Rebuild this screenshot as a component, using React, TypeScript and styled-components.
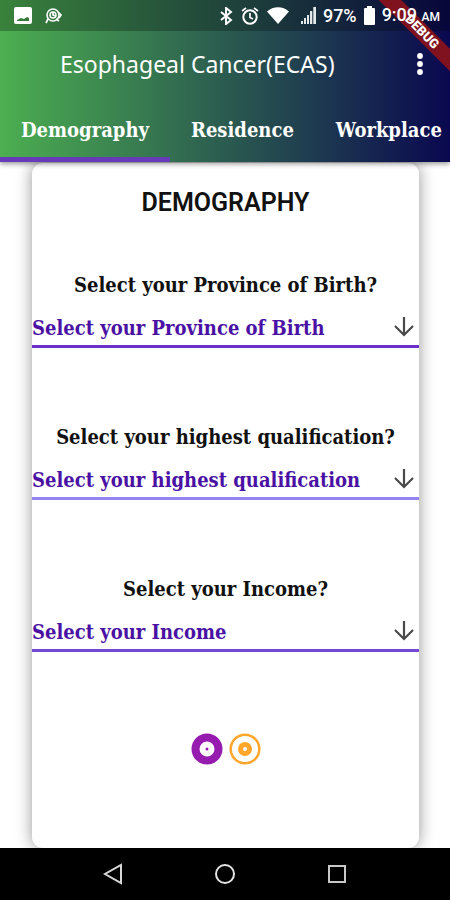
import React from "react";
import styled, { createGlobalStyle } from "styled-components";

const slab = `"Roboto Slab", "DejaVu Serif Condensed", "DejaVu Serif", serif`;

const GlobalStyle = createGlobalStyle`
  *, *::before, *::after { box-sizing: border-box; }
  body { margin: 0; background: #fff; font-family: Roboto, sans-serif; }
  button, select { font: inherit; color: inherit; background: none; border: 0; padding: 0; margin: 0; cursor: pointer; }
`;

const Screen = styled.div`
  position: relative;
  min-height: 100vh;
  display: flex;
  flex-direction: column;
  overflow: hidden;
`;

const Header = styled.header`
  position: relative;
  z-index: 1;
  color: #fff;
  background:
    linear-gradient(rgba(0, 0, 0, 0.26), rgba(0, 0, 0, 0.26)) top / 100% 31px no-repeat,
    linear-gradient(90deg, #4caf50 0%, #0a0850 100%);
  box-shadow: 0 2px 5px rgba(0, 0, 0, 0.4);
`;

const StatusBar = styled.div`
  position: relative;
  z-index: 2;
  display: flex;
  align-items: center;
  justify-content: space-between;
  height: 31px;
  padding: 0 10px 0 14px;
`;

const StatusGroup = styled.div<{ $gap: number }>`
  display: flex;
  align-items: center;
  gap: ${(p) => p.$gap}px;
`;

const StatusText = styled.span`
  font-size: 18px;
  font-weight: 500;
  line-height: 20px;
  white-space: nowrap;

  small { font-size: 12px; }
`;

const Connectivity = styled.div`
  display: flex;
  align-items: center;
  gap: 8px;
  margin-right: 0;

  > :last-child { margin-left: 4px; }
`;

const AppBar = styled.div`
  display: flex;
  align-items: center;
  justify-content: space-between;
  height: 66px;
  padding: 0 20px 0 60px;
`;

const Title = styled.h1`
  margin: 0;
  font: 400 23px/32px "Noto Sans", sans-serif;
  white-space: nowrap;
`;

const MenuButton = styled.button`
  display: flex;
  justify-content: center;
  width: 20px;
  height: 32px;
  align-items: center;
`;

const Tabs = styled.nav`
  display: flex;
  height: 65px;
  overflow: hidden;
`;

const Tab = styled.button<{ $active?: boolean }>`
  flex: none;
  padding: 0 21px;
  font: 700 20px/24px ${slab};
  color: #fff;
  white-space: nowrap;
  border-top: 5px solid transparent;
  border-bottom: 5px solid ${(p) => (p.$active ? "#673ab7" : "transparent")};
`;

const Ribbon = styled.div`
  position: absolute;
  top: 24px;
  right: -32px;
  z-index: 1;
  width: 120px;
  height: 16px;
  transform: rotate(45deg);
  background: #80121f;
  color: #fff;
  font: 900 13px/16px Roboto, sans-serif;
  text-align: center;
`;

const Content = styled.main`
  flex: 1;
  display: flex;
  padding: 1px 31px 0 32px;
`;

const Card = styled.form`
  flex: 1;
  min-width: 0;
  display: flex;
  flex-direction: column;
  padding-top: 24px;
  border-radius: 11px;
  background: #fff;
  box-shadow: 0 0 16px rgba(0, 0, 0, 0.42);
`;

const Heading = styled.h2`
  margin: 0 0 54px;
  font: 600 25px/32px Roboto, sans-serif;
  color: #111;
  text-align: center;
`;

const Fields = styled.div`
  display: flex;
  flex-direction: column;
  gap: 77px;
`;

const Field = styled.div`
  display: flex;
  flex-direction: column;
  gap: 12px;
`;

const Question = styled.label`
  font: 600 20px/24px ${slab};
  color: #111;
  text-align: center;
  white-space: nowrap;
`;

const SelectRow = styled.div<{ $line: string }>`
  display: grid;
  align-items: center;
  height: 39px;
  border-bottom: 3px solid ${(p) => p.$line};

  > * { grid-area: 1 / 1; }
  > svg { justify-self: end; margin-right: 3px; pointer-events: none; }
`;

const Select = styled.select`
  appearance: none;
  width: 100%;
  height: 36px;
  padding-top: 2px;
  outline: 0;
  font: 600 20px/24px ${slab};
  color: #4a12a4;
`;

const Pager = styled.div`
  display: flex;
  justify-content: center;
  gap: 6px;
  margin-top: 81px;
`;

const PageButton = styled.button`
  width: 32px;
  height: 32px;

  svg { display: block; }
`;

const NavBar = styled.nav`
  position: relative;
  z-index: 1;
  display: flex;
  justify-content: center;
  align-items: center;
  gap: 80px;
  height: 52px;
  background: #000;
`;

const NavButton = styled.button`
  width: 32px;
  height: 32px;

  svg { display: block; }
`;

const PictureIcon = () => (
  <svg width="18" height="17" viewBox="0 0 18 17">
    <path fill="#fff" fillRule="evenodd" d="M2 0h14a2 2 0 0 1 2 2v13a2 2 0 0 1-2 2H2a2 2 0 0 1-2-2V2a2 2 0 0 1 2-2zM3 14h12v-3l-2-1-3 2-3-1-4 2z" />
  </svg>
);

const CallIcon = () => (
  <svg width="17" height="16" viewBox="0 0 17 16" fill="none" stroke="#fff">
    <circle cx="8" cy="7" r="6" strokeWidth="1.6" />
    <circle cx="8" cy="7" r="3" strokeWidth="1.6" />
    <path d="M8 4v3l2 1M3 11l-2 4M13 4l3 3-2 3M11 11l3 2" strokeWidth="1.7" />
  </svg>
);

const BluetoothIcon = () => (
  <svg width="13" height="18" viewBox="0 0 13 18" fill="none" stroke="#fff" strokeWidth="2">
    <path d="M1 5l10 8-5 4V1l5 4-10 8" />
  </svg>
);

const AlarmIcon = () => (
  <svg width="18" height="18" viewBox="0 0 18 18" fill="none" stroke="#fff" strokeWidth="2">
    <circle cx="9" cy="10" r="6.7" />
    <path d="M9 6v4.5l3 1.5M1 4l4-3M17 4l-4-3" strokeWidth="1.7" />
  </svg>
);

const WifiIcon = () => (
  <svg width="22" height="17" viewBox="0 0 22 17">
    <path fill="#fff" d="M0 4.5C6-1.2 16-1.2 22 4.5L11 17z" />
  </svg>
);

const SignalIcon = () => (
  <svg width="15" height="17" viewBox="0 0 15 17" fill="#e4e9ea">
    <path d="M0 14h2v3H0zM3 11h2v6H3zM6 8h2v9H6zM9 4h2.300v13H9zM12.300 0H15v17h-2.700z" />
  </svg>
);

const BatteryIcon = () => (
  <svg width="11" height="19" viewBox="0 0 11 19" fill="#fff">
    <path d="M3 0h5v2h2a1 1 0 0 1 1 1v15a1 1 0 0 1-1 1H1a1 1 0 0 1-1-1V3a1 1 0 0 1 1-1h2z" />
  </svg>
);

const MoreIcon = () => (
  <svg width="6" height="22" viewBox="0 0 6 22" fill="#fff">
    <circle cx="3" cy="3" r="2.900" />
    <circle cx="3" cy="11" r="2.900" />
    <circle cx="3" cy="19" r="2.900" />
  </svg>
);

const ArrowDown = () => (
  <svg width="24" height="24" viewBox="0 0 24 24" fill="none" stroke="#4a4a4a" strokeWidth="2.2">
    <path d="M12 2v18M3 11l9 9 9-9" />
  </svg>
);

const fields = [
  { id: "province", question: "Select your Province of Birth?", prompt: "Select your Province of Birth", line: "#6a30cc" },
  { id: "qualification", question: "Select your highest qualification?", prompt: "Select your highest qualification", line: "#9484f0" },
  { id: "income", question: "Select your Income?", prompt: "Select your Income", line: "#7548d8" },
];

export default function App() {
  return (
    <Screen>
      <GlobalStyle />
      <Header>
        <StatusBar>
          <StatusGroup $gap={13}>
            <PictureIcon />
            <CallIcon />
          </StatusGroup>
          <StatusGroup $gap={7}>
            <Connectivity>
              <BluetoothIcon />
              <AlarmIcon />
              <WifiIcon />
              <SignalIcon />
            </Connectivity>
            <StatusText>97%</StatusText>
            <BatteryIcon />
            <StatusText>9:09 <small>AM</small></StatusText>
          </StatusGroup>
        </StatusBar>
        <AppBar>
          <Title>Esophageal Cancer(ECAS)</Title>
          <MenuButton type="button" aria-label="More options"><MoreIcon /></MenuButton>
        </AppBar>
        <Tabs>
          <Tab type="button" $active>Demography</Tab>
          <Tab type="button">Residence</Tab>
          <Tab type="button">Workplace</Tab>
        </Tabs>
        <Ribbon>DEBUG</Ribbon>
      </Header>
      <Content>
        <Card>
          <Heading>DEMOGRAPHY</Heading>
          <Fields>
            {fields.map((f) => (
              <Field key={f.id}>
                <Question htmlFor={f.id}>{f.question}</Question>
                <SelectRow $line={f.line}>
                  <Select id={f.id}>
                    <option>{f.prompt}</option>
                  </Select>
                  <ArrowDown />
                </SelectRow>
              </Field>
            ))}
          </Fields>
          <Pager>
            <PageButton type="button" aria-label="Page 1">
              <svg width="32" height="32" viewBox="0 0 32 32">
                <circle cx="16" cy="16" r="11.500" fill="none" stroke="#961cb0" strokeWidth="8" />
                <circle cx="16" cy="16" r="1.500" fill="#961cb0" />
              </svg>
            </PageButton>
            <PageButton type="button" aria-label="Page 2">
              <svg width="32" height="32" viewBox="0 0 32 32" fill="none" stroke="#ffa62b">
                <circle cx="16" cy="16" r="14.300" strokeWidth="2.500" />
                <circle cx="16" cy="16" r="4.500" strokeWidth="5" />
              </svg>
            </PageButton>
          </Pager>
        </Card>
      </Content>
      <NavBar>
        <NavButton type="button" aria-label="Back">
          <svg width="32" height="32" viewBox="0 0 32 32" fill="none" stroke="#d8d8d8" strokeWidth="2">
            <path d="M24 7v18L8 16z" />
          </svg>
        </NavButton>
        <NavButton type="button" aria-label="Home">
          <svg width="32" height="32" viewBox="0 0 32 32" fill="none" stroke="#e4e4e4" strokeWidth="2">
            <circle cx="16" cy="16" r="9" />
          </svg>
        </NavButton>
        <NavButton type="button" aria-label="Recent apps">
          <svg width="32" height="32" viewBox="0 0 32 32" fill="none" stroke="#c8c8c8" strokeWidth="2">
            <path d="M8 8h16v16H8z" />
          </svg>
        </NavButton>
      </NavBar>
    </Screen>
  );
}
